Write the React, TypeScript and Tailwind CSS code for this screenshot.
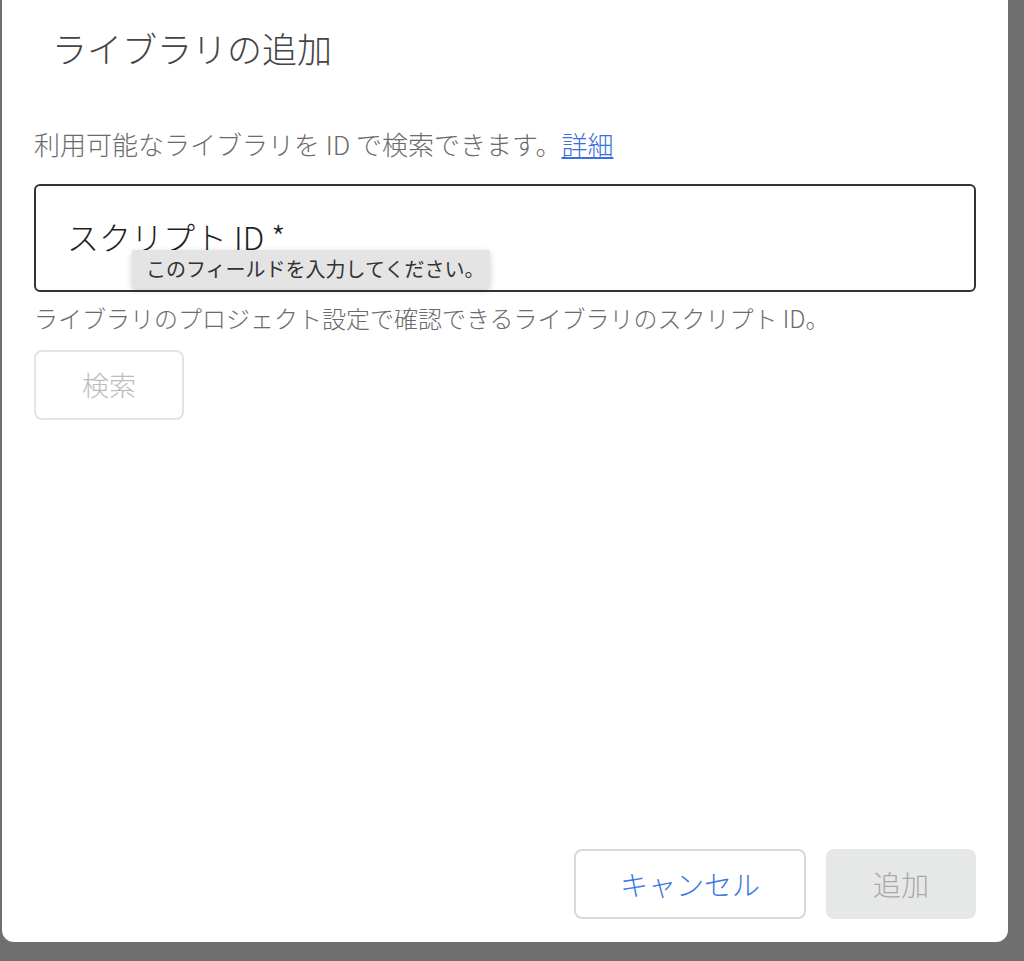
const font = { fontFamily: '"Noto Sans CJK JP", "Noto Sans", sans-serif' }

export default function App() {
    return (
        <div className="w-[1024px] h-[961px] bg-[#6f6f6f] pl-[2px] pr-[16px] pb-[19px]" style={font}>
            <div className="h-full bg-white rounded-b-[12px] flex flex-col px-[32px]">
                <h2 className="pl-[18px] pt-[26px] text-[35px] leading-[44px] text-[#444] font-light">ライブラリの追加</h2>

                <p className="mt-[56px] text-[26px] leading-[36px] text-[#6b6b6b] font-light">
                    利用可能なライブラリを ID で検索できます。<a href="#" className="text-[#3b6fe0] underline">詳細</a>
                </p>

                <div className="relative mt-[22px] h-[108px] border-2 border-[#333] rounded-[6px]">
                    <div className="pl-[31px] pt-[28px] text-[32px] leading-[44px] text-[#1f1f1f] font-light">スクリプト ID *</div>
                    <div className="absolute left-[96px] top-[64px] w-[358px] h-[38px] bg-[#e4e4e4] rounded-[3px] shadow-[0_2px_6px_rgba(0,0,0,0.2)] flex items-center pl-[14px] text-[20px] text-[#333]">
                        このフィールドを入力してください。
                    </div>
                </div>

                <p className="mt-[10px] text-[24px] leading-[32px] text-[#6b6b6b] font-light">ライブラリのプロジェクト設定で確認できるライブラリのスクリプト ID。</p>

                <div className="mt-[16px]">
                    <button className="w-[150px] h-[70px] border-2 border-[#e3e3e3] rounded-[8px] text-[27px] text-[#bdbdbd] font-light">検索</button>
                </div>

                <div className="mt-auto mb-[23px] flex justify-end gap-[20px]">
                    <button className="w-[232px] h-[70px] border-2 border-[#d8d8de] rounded-[8px] text-[28px] text-[#3b78e0] font-light">キャンセル</button>
                    <button className="w-[150px] h-[70px] bg-[#e6e7e7] rounded-[8px] text-[28px] text-[#a9a9a9] font-light">追加</button>
                </div>
            </div>
        </div>
    )
}
